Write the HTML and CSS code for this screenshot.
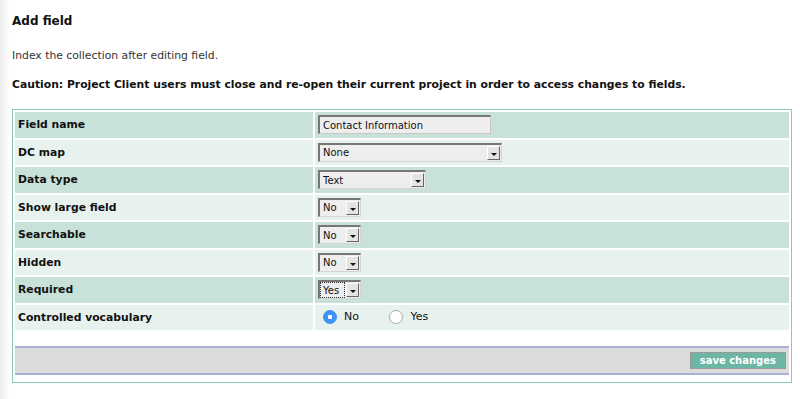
FILE: index.html
```html
<!DOCTYPE html>
<html lang="en">
<head>
<meta charset="UTF-8">
<meta name="viewport" content="width=device-width, initial-scale=1.0">
<title>Add field</title>
<link rel="stylesheet" href="styles.css">
</head>
<body>
<div class="page">
    <h2>Add field</h2>
    <p class="note">Index the collection after editing field.</p>
    <p class="caution">Caution: Project Client users must close and re-open their current project in order to access changes to fields.</p>

    <div class="box">
        <table class="fields">
            <tr class="dark">
                <td class="label">Field name</td>
                <td class="value"><input type="text" class="text-input" value="Contact Information"></td>
            </tr>
            <tr class="light">
                <td class="label">DC map</td>
                <td class="value">
                    <span class="dropdown w-dc"><select><option>None</option></select><span class="arrow"></span></span>
                </td>
            </tr>
            <tr class="dark">
                <td class="label">Data type</td>
                <td class="value">
                    <span class="dropdown w-type"><select><option>Text</option></select><span class="arrow"></span></span>
                </td>
            </tr>
            <tr class="light">
                <td class="label">Show large field</td>
                <td class="value">
                    <span class="dropdown w-small"><select><option>No</option></select><span class="arrow"></span></span>
                </td>
            </tr>
            <tr class="dark">
                <td class="label">Searchable</td>
                <td class="value">
                    <span class="dropdown w-small"><select><option>No</option></select><span class="arrow"></span></span>
                </td>
            </tr>
            <tr class="light">
                <td class="label">Hidden</td>
                <td class="value">
                    <span class="dropdown w-small"><select><option>No</option></select><span class="arrow"></span></span>
                </td>
            </tr>
            <tr class="dark">
                <td class="label">Required</td>
                <td class="value">
                    <span class="dropdown w-small focused"><select><option>Yes</option></select><span class="arrow"></span></span>
                </td>
            </tr>
            <tr class="light">
                <td class="label">Controlled vocabulary</td>
                <td class="value">
                    <label class="radio"><input type="radio" name="cv" checked> No</label>
                    <label class="radio"><input type="radio" name="cv"> Yes</label>
                </td>
            </tr>
        </table>

        <div class="actions">
            <button type="button">save changes</button>
        </div>
    </div>
</div>
</body>
</html>
```

FILE: styles.css
```css
body {
    margin: 0;
    font-family: "DejaVu Sans", Verdana, sans-serif;
    color: #111;
    background: linear-gradient(to right, #ececec, #fff 10px);
}

.page {
    padding: 14px 8px 0 12px;
}

h2 {
    margin: 0;
    font-size: 12px;
    font-weight: bold;
}

.note {
    margin: 21px 0 0;
    font-size: 10.8px;
    color: #333;
}

.caution {
    margin: 16px 0 0;
    font-size: 10.8px;
    font-weight: bold;
}

.box {
    margin-top: 18px;
    width: 778px;
    border: 1px solid #8fc7b8;
    padding-bottom: 7px;
}

.fields {
    border-collapse: separate;
    border-spacing: 2px;
    width: 100%;
}

.fields td {
    height: 25.5px;
    padding: 0 3px;
    font-size: 10.8px;
}

.label {
    width: 292px;
    font-weight: bold;
}

.dark td {
    background-color: #c8e2da;
}

.light td {
    background-color: #e7f2ee;
}

.text-input {
    box-sizing: border-box;
    width: 173px;
    height: 19px;
    margin: 0;
    padding: 0 3px;
    border: 1px solid #c8c8c8;
    border-top: 2px solid #777;
    border-left: 2px solid #777;
    background-color: #eee;
    font-family: "DejaVu Sans", Verdana, sans-serif;
    font-size: 10px;
    color: #111;
}

.dropdown {
    display: inline-flex;
    box-sizing: border-box;
    height: 19px;
    vertical-align: middle;
    border: 1px solid #d4d4d4;
    border-top: 2px solid #777;
    border-left: 2px solid #777;
    background-color: #eee;
}

.dropdown select {
    flex: 1;
    min-width: 0;
    appearance: none;
    border: none;
    background: transparent;
    padding: 0 0 0 3px;
    margin: 0;
    font-family: "DejaVu Sans", Verdana, sans-serif;
    font-size: 10px;
    color: #111;
}

.dropdown .arrow {
    position: relative;
    width: 11px;
    margin: 1px;
    border: 1px solid #fff;
    border-right-color: #666;
    border-bottom-color: #666;
    background-color: #e4e4e4;
}

.dropdown .arrow::after {
    content: "";
    position: absolute;
    left: 3px;
    top: 6px;
    border-left: 3px solid transparent;
    border-right: 3px solid transparent;
    border-top: 3px solid #111;
}

.w-dc { width: 184px; }
.w-type { width: 108px; }
.w-small { width: 43px; }

.focused select {
    outline: 1px dotted #333;
    outline-offset: -1px;
}

.radio {
    display: inline-flex;
    align-items: center;
    margin-left: 5px;
    margin-right: 22px;
    font-size: 11px;
    margin-top: 2px;
}

.radio input {
    appearance: none;
    width: 14px;
    height: 14px;
    margin: 0 7px 0 0;
    border: 1px solid #aaa;
    border-radius: 50%;
    background-color: #fff;
}

.radio input:checked {
    border-color: #3a8ef0;
    background: radial-gradient(circle, #fff 0 2px, #3d94f6 2.5px);
}

.actions {
    display: flex;
    justify-content: flex-end;
    margin: 14px 2px 0;
    padding: 4px 3px;
    background-color: #dcdcdc;
    border-top: 2px solid #aab0d8;
    border-bottom: 2px solid #aab0d8;
}

.actions button {
    height: 17px;
    padding: 0 9px;
    border: 1px solid #999;
    background-color: #6db6a5;
    color: #fff;
    font-family: "DejaVu Sans", Verdana, sans-serif;
    font-size: 10px;
    font-weight: bold;
    cursor: pointer;
}
```
